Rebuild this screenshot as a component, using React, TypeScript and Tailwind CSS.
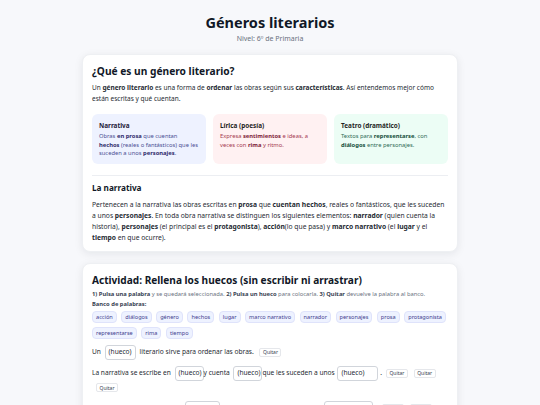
import React, { useState } from "react";

type Box = {
  title: string;
  body: React.ReactNode;
  wrap: string;
  head: string;
  text: string;
};

const FONT = { fontFamily: '"Noto Sans", "Open Sans", sans-serif' };

const BANK = [
  "acción",
  "diálogos",
  "género",
  "hechos",
  "lugar",
  "marco narrativo",
  "narrador",
  "personajes",
  "prosa",
  "protagonista",
  "representarse",
  "rima",
  "tiempo",
];

const Hueco = ({ w, value, onClick }: { w: string; value?: string; onClick: () => void }) => (
  <button
    onClick={onClick}
    className={`inline-flex h-[15px] items-center rounded-[3px] border border-[#d1d5db] bg-white px-[3px] align-middle text-[6.6px] text-[#1f2937] ${w}`}
  >
    {value ?? "(hueco)"}
  </button>
);

const Quitar = () => (
  <button className="ml-[4px] inline-flex h-[9px] w-[22px] items-center justify-center rounded-[2px] border border-[#e5e7eb] bg-white align-middle text-[5px] text-[#374151]">
    Quitar
  </button>
);

export default function App() {
  const [selected, setSelected] = useState<string | null>(null);
  const [filled, setFilled] = useState<Record<string, string>>({});

  const place = (key: string) => {
    if (!selected) return;
    setFilled((prev) => ({ ...prev, [key]: selected }));
    setSelected(null);
  };

  const boxes: Box[] = [
    {
      title: "Narrativa",
      wrap: "bg-[#eef2ff]",
      head: "text-[#1e1b3a]",
      text: "text-[#4a4f94]",
      body: (
        <>
          Obras <b className="text-[#2e2a6b]">en prosa</b> que cuentan{" "}
          <b className="text-[#2e2a6b]">hechos</b> (reales o fantásticos) que les suceden a unos{" "}
          <b className="text-[#2e2a6b]">personajes</b>.
        </>
      ),
    },
    {
      title: "Lírica (poesía)",
      wrap: "bg-[#fff1f2]",
      head: "text-[#1f1f1f]",
      text: "text-[#a5384f]",
      body: (
        <>
          Expresa <b className="text-[#7f1d3a]">sentimientos</b> e ideas, a veces con{" "}
          <b className="text-[#7f1d3a]">rima</b> y ritmo.
        </>
      ),
    },
    {
      title: "Teatro (dramático)",
      wrap: "bg-[#ecfdf5]",
      head: "text-[#1f1f1f]",
      text: "text-[#2f6b55]",
      body: (
        <>
          Textos para <b className="text-[#134e3a]">representarse</b>, con{" "}
          <b className="text-[#134e3a]">diálogos</b> entre personajes.
        </>
      ),
    },
  ];

  return (
    <div style={FONT} className="min-h-screen bg-[#f7f8fb] px-[82px] pt-[10px] text-[#262b33]">
      {/* Page header */}
      <header className="text-center">
        <h1 className="text-[14.5px] font-bold leading-[24px] text-[#111827]">Géneros literarios</h1>
        <p className="text-[7px] leading-[10px] text-[#6b7280]">Nivel: 6º de Primaria</p>
      </header>

      {/* Theory card */}
      <section className="mt-[10px] rounded-[8px] border border-[#eef0f3] bg-white px-[9px] pb-[7px] pt-[8px] shadow-[0_2px_8px_rgba(15,23,42,0.08)]">
        <h2 className="text-[10.2px] font-bold leading-[16px] text-[#111827]">¿Qué es un género literario?</h2>
        <p className="mt-[3px] text-[6.5px] leading-[11px]">
          Un <b>género literario</b> es una forma de <b>ordenar</b> las obras según sus{" "}
          <b>características</b>. Así entendemos mejor cómo están escritas y qué cuentan.
        </p>

        <div className="mt-[10px] grid grid-cols-3 gap-[7px]">
          {boxes.map((b) => (
            <div key={b.title} className={`rounded-[6px] px-[7px] pb-[6px] pt-[6px] ${b.wrap}`}>
              <div className={`text-[6.4px] font-bold leading-[11px] ${b.head}`}>{b.title}</div>
              <p className={`mt-[1px] text-[5.8px] leading-[8.5px] ${b.text}`}>{b.body}</p>
            </div>
          ))}
        </div>

        <div className="mt-[11px] border-t border-[#eceef2]" />

        <h3 className="mt-[6px] text-[8.2px] font-bold leading-[12px] text-[#111827]">La narrativa</h3>
        <p className="mt-[5px] text-[6.72px] leading-[11.3px]">
          Pertenecen a la narrativa las obras escritas en <b>prosa</b> que <b>cuentan hechos</b>, reales o
          fantásticos, que les suceden a unos <b>personajes</b>. En toda obra narrativa se distinguen los
          siguientes elementos: <b>narrador</b> (quien cuenta la historia), <b>personajes</b> (el principal es
          el <b>protagonista</b>), <b>acción</b>(lo que pasa) y <b>marco narrativo</b> (el <b>lugar</b> y el{" "}
          <b>tiempo</b> en que ocurre).
        </p>
      </section>

      {/* Activity card */}
      <section className="mt-[11px] rounded-[8px] border border-[#eef0f3] bg-white px-[9px] pb-[10px] pt-[8px] shadow-[0_2px_8px_rgba(15,23,42,0.08)]">
        <h2 className="text-[10.1px] font-bold leading-[16px] text-[#111827]">
          Actividad: Rellena los huecos (sin escribir ni arrastrar)
        </h2>
        <p className="mt-[2px] text-[5.8px] leading-[9px] text-[#6b7280]">
          <b className="text-[#374151]">1) Pulsa una palabra</b> y se quedará seleccionada.{" "}
          <b className="text-[#374151]">2) Pulsa un hueco</b> para colocarla. <b className="text-[#374151]">3) Quitar</b>{" "}
          devuelve la palabra al banco.
        </p>
        <p className="mt-[1px] text-[5.8px] font-bold leading-[9px] text-[#374151]">Banco de palabras:</p>

        <div className="mt-[2px] flex flex-wrap gap-x-[4.5px] gap-y-[4px]">
          {BANK.map((w) => (
            <button
              key={w}
              onClick={() => setSelected(w)}
              className={`h-[12px] rounded-[4px] border px-[3px] text-[5.6px] leading-[10px] text-[#3f3d8f] ${
                selected === w ? "border-[#6366f1] bg-[#e0e7ff]" : "border-[#dfe3fb] bg-[#eef2ff]"
              }`}
            >
              {w}
            </button>
          ))}
        </div>

        {/* Sentences */}
        <div className="mt-[6px] text-[6.6px] leading-[14px]">
          <p className="mb-[6px]">
            Un <Hueco w="w-[31px] ml-[2px] mr-[4px]" value={filled.a} onClick={() => place("a")} />
            literario sirve para ordenar las obras. <Quitar />
          </p>
          <p className="mb-[6px]">
            La narrativa se escribe en{" "}
            <Hueco w="w-[29px] ml-[2px]" value={filled.b} onClick={() => place("b")} />y cuenta{" "}
            <Hueco w="w-[29px] ml-[2px]" value={filled.c} onClick={() => place("c")} />
            que les suceden a unos{" "}
            <Hueco w="w-[41px] ml-[1px]" value={filled.d} onClick={() => place("d")} /> .
            <Quitar /> <Quitar /> <Quitar />
          </p>
          <p>
            Quien cuenta la historia es el{" "}
            <Hueco w="w-[35px] ml-[2px] mr-[3px]" value={filled.e} onClick={() => place("e")} />, el
            personaje principal se llama{" "}
            <Hueco w="w-[49px] ml-[2px] mr-[3px]" value={filled.f} onClick={() => place("f")} />{" "}
            <Quitar /> <Quitar />
          </p>
        </div>
      </section>
    </div>
  );
}
